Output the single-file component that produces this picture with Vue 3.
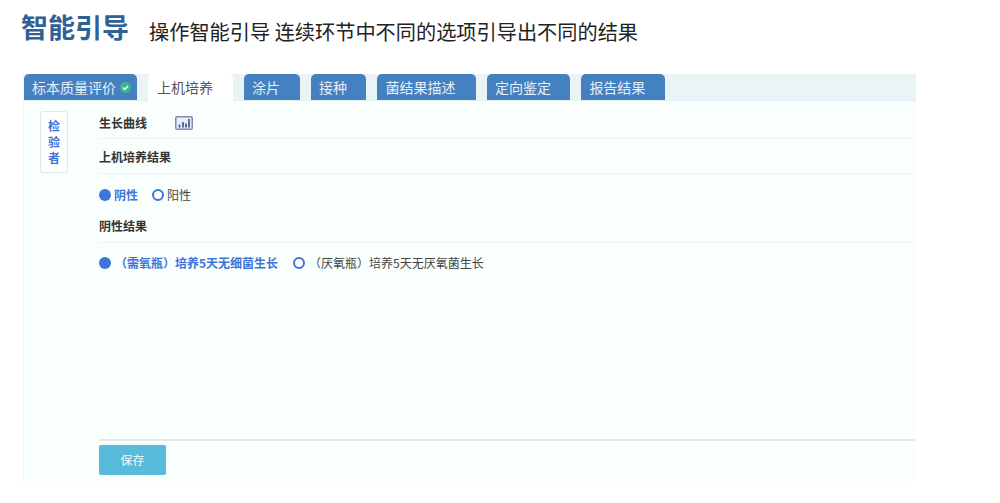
<script setup>
const tabs = [
  { name: '标本质量评价', w: 113, done: true },
  { name: '上机培养', w: 85, active: true },
  { name: '涂片', w: 56 },
  { name: '接种', w: 55.4 },
  { name: '菌结果描述', w: 98.6 },
  { name: '定向鉴定', w: 83.4 },
  { name: '报告结果', w: 84 },
]
</script>

<template>
  <div class="page">
    <header class="head">
      <h1 class="title">智能引导</h1>
      <p class="sub">操作智能引导 连续环节中不同的选项引导出不同的结果</p>
    </header>
    <section class="panel">
      <nav class="tabs">
        <div
          v-for="t in tabs"
          :key="t.name"
          class="tab"
          :class="{ active: t.active }"
          :style="{ width: t.w + 'px' }"
        >
          <span>{{ t.name }}</span>
          <svg v-if="t.done" class="check" width="11" height="11" viewBox="0 0 11 11">
            <circle cx="5.5" cy="5.5" r="5.5" fill="#35b98f" />
            <path d="M3 5.6 L4.9 7.4 L8 3.9" fill="none" stroke="#fff" stroke-width="1.5" />
          </svg>
        </div>
      </nav>
      <div class="body">
        <aside class="side"><div class="inspector">检<br />验<br />者</div></aside>
        <main class="main">
          <div class="content">
            <div class="row first">
              <span class="label">生长曲线</span>
              <svg class="chart" width="18" height="14" viewBox="0 0 18 14">
                <rect x="0.75" y="0.75" width="16.5" height="12.5" rx="1.5" fill="#e9edf6" stroke="#7f8cae" stroke-width="1.5" />
                <path d="M4.5 11.5V8.5M8 11.5V6M11 11.5V7.5M14 11.5V3" stroke="#3f5a8c" stroke-width="1.7" fill="none" />
              </svg>
            </div>
            <div class="row"><span class="label">上机培养结果</span></div>
            <div class="options one">
              <span class="opt on"><i class="dot"></i>阴性</span>
              <span class="opt"><i class="ring"></i>阳性</span>
            </div>
            <div class="row"><span class="label">阴性结果</span></div>
            <div class="options two">
              <span class="opt on wide"><i class="dot"></i>（需氧瓶）培养5天无细菌生长</span>
              <span class="opt wide"><i class="ring"></i>（厌氧瓶）培养5天无厌氧菌生长</span>
            </div>
          </div>
          <footer class="foot"><button class="save" type="button">保存</button></footer>
        </main>
      </div>
    </section>
  </div>
</template>

<style>
html, body { background: #fff; }
</style>

<style scoped>
.page {
  width: 1000px;
  height: 503px;
  overflow: hidden;
  background: #fff;
  font-family: "Noto Sans CJK SC", "Liberation Sans", sans-serif;
}
.head {
  display: flex;
  align-items: center;
  height: 58px;
  padding: 0 0 0 21px;
  margin-bottom: 16px;
}
.title {
  margin: 0 0 4px;
  font-size: 27px;
  line-height: 54px;
  font-weight: 700;
  color: #2f6096;
}
.sub {
  margin: 6px 0 0 20px;
  font-size: 20.2px;
  line-height: 30px;
  color: #222;
}
.panel {
  width: 893px;
  height: 407px;
  margin-left: 23px;
  background: #f9fffd;
  border-left: 1px solid #eef3f4;
  box-sizing: border-box;
  display: flex;
  flex-direction: column;
}
.tabs {
  display: flex;
  gap: 11px;
  height: 27px;
  background: #eaf3f6;
  border-bottom: 1px solid #e4eef2;
  box-sizing: border-box;
  flex: none;
}
.tab {
  flex: none;
  height: 26px;
  box-sizing: border-box;
  padding: 0 0 1px 8px;
  display: flex;
  align-items: center;
  gap: 4px;
  background: #4581c1;
  color: #e6eef6;
  font-size: 14px;
  border-radius: 5px 5px 0 0;
  white-space: nowrap;
}
.tab.active {
  background: #fff;
  color: #555;
  height: 27px;
  padding-left: 9px;
}
.check { margin-top: 1px; }
.body {
  flex: 1;
  display: flex;
  min-height: 0;
}
.side {
  width: 75px;
  flex: none;
  padding: 10px 0 0 16px;
  box-sizing: border-box;
}
.inspector {
  width: 28px;
  height: 62px;
  box-sizing: border-box;
  border: 1px solid #dfe6f4;
  border-radius: 3px;
  background: #fff;
  color: #3f74d8;
  font-size: 12px;
  font-weight: 700;
  line-height: 16px;
  text-align: center;
  padding-top: 6px;
}
.main {
  flex: 1;
  min-width: 0;
  padding-right: 1px;
  display: flex;
  flex-direction: column;
}
.content { flex: 1; }
.row {
  height: 35px;
  box-sizing: border-box;
  border-bottom: 1px solid #eef2f1;
  display: flex;
  align-items: center;
}
.row.first { height: 38px; padding-top: 5px; }
.label {
  font-size: 12px;
  font-weight: 700;
  color: #333;
}
.chart { margin-left: 28px; margin-top: 2px; }
.options {
  display: flex;
  align-items: center;
  font-size: 12px;
  color: #444;
  box-sizing: border-box;
}
.options.one { height: 34px; gap: 14px; padding-top: 7px; }
.options.two { height: 40px; gap: 15px; padding-bottom: 1px; }
.opt {
  display: inline-flex;
  align-items: center;
  gap: 3px;
}
.opt.wide { gap: 4px; }
.opt.on { color: #3f74d8; font-weight: 700; }
.dot, .ring {
  width: 12px;
  height: 12px;
  border-radius: 50%;
  box-sizing: border-box;
  flex: none;
}
.dot { background: #3f74d8; }
.ring { border: 2px solid #3f74d8; background: #fff; }
.foot {
  height: 42px;
  flex: none;
  border-top: 2px solid #e4e8e8;
  box-sizing: border-box;
  padding-top: 4px;
}
.save {
  display: block;
  width: 67px;
  height: 30px;
  padding: 0 0 2px;
  border: 0;
  border-radius: 2px;
  background: #58bbdc;
  color: #eef9fc;
  font: 12px "Noto Sans CJK SC", sans-serif;
}
</style>
